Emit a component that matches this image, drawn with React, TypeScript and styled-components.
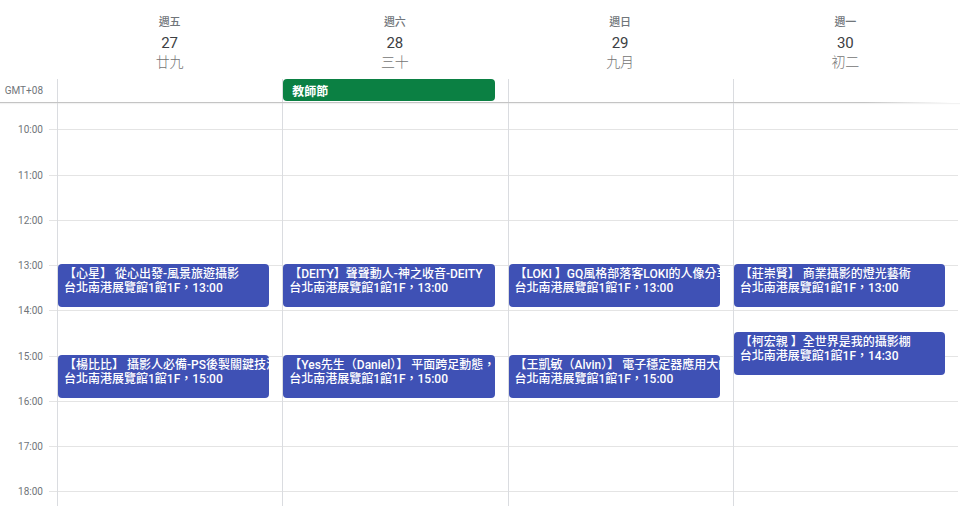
import React from "react"
import styled, { createGlobalStyle } from "styled-components"

const HOUR = 45.25
const FIRST_HOUR = 9
const LAST_LABEL = 18

const days = [
  { weekday: "週五", date: "27", lunar: "廿九" },
  { weekday: "週六", date: "28", lunar: "三十" },
  { weekday: "週日", date: "29", lunar: "九月" },
  { weekday: "週一", date: "30", lunar: "初二" },
]

const allDay: Record<number, string> = { 1: "教師節" }

type CalEvent = { day: number; start: number; title: string; where: string; time: string }

const events: CalEvent[] = [
  { day: 0, start: 13, title: "【心星】 從心出發-風景旅遊攝影", where: "台北南港展覽館1館1F", time: "13:00" },
  { day: 0, start: 15, title: "【楊比比】 攝影人必備-PS後製關鍵技法", where: "台北南港展覽館1館1F", time: "15:00" },
  { day: 1, start: 13, title: "【DEITY】聲聲動人-神之收音-DEITY", where: "台北南港展覽館1館1F", time: "13:00" },
  { day: 1, start: 15, title: "【Yes先生（Daniel）】 平面跨足動態，", where: "台北南港展覽館1館1F", time: "15:00" },
  { day: 2, start: 13, title: "【LOKI 】GQ風格部落客LOKI的人像分享", where: "台北南港展覽館1館1F", time: "13:00" },
  { day: 2, start: 15, title: "【王凱敏（Alvin）】 電子穩定器應用大師", where: "台北南港展覽館1館1F", time: "15:00" },
  { day: 3, start: 13, title: "【莊崇賢】 商業攝影的燈光藝術", where: "台北南港展覽館1館1F", time: "13:00" },
  { day: 3, start: 14.5, title: "【柯宏親 】全世界是我的攝影棚", where: "台北南港展覽館1館1F", time: "14:30" },
]

const hours = Array.from({ length: 10 }, (_, i) => FIRST_HOUR + i)

const GlobalStyle = createGlobalStyle`
  html, body {
    margin: 0;
    padding: 0;
    background: #fff;
    font-family: Roboto, "Noto Sans CJK TC", sans-serif;
    overflow: hidden;
  }
`

const Page = styled.div`
  width: 960px;
  height: 506px;
  display: flex;
  flex-direction: column;
  overflow: hidden;
`

const Columns = styled.div`
  display: grid;
  grid-template-columns: 57px repeat(4, 1fr);
  padding-right: 2px;
`

const Header = styled(Columns)`
  height: 79px;
`

const DayHead = styled.div`
  display: flex;
  flex-direction: column;
  align-items: center;
  padding-top: 15px;
`

const Weekday = styled.div`
  font-size: 11px;
  line-height: 16px;
  font-weight: 500;
  color: #70757a;
`

const DateNum = styled.div`
  margin-top: 2px;
  font-size: 15px;
  line-height: 20px;
  font-weight: 400;
  color: #3c4043;
`

const Lunar = styled.div`
  font-size: 14px;
  line-height: 18px;
  font-weight: 300;
  color: #757575;
`

const AllDayRow = styled(Columns)`
  height: 23px;
  border-bottom: 1px solid transparent;
  border-image: linear-gradient(to right, #c4c4c4 0%, #c4c4c4 90%, rgba(196, 196, 196, 0) 99%) 1;
  box-shadow: 0 1px 1px rgba(0, 0, 0, 0.05);
`

const Zone = styled.div`
  display: flex;
  align-items: center;
  justify-content: flex-end;
  padding-right: 14px;
  font-size: 10px;
  color: #70757a;
`

const AllDayCell = styled.div`
  border-left: 1px solid #dadce0;
`

const AllDayChip = styled.div`
  width: calc(100% - 13px);
  height: 22px;
  box-sizing: border-box;
  padding-left: 9px;
  display: flex;
  align-items: center;
  border-radius: 4px;
  background: #0b8043;
  color: #fff;
  font-size: 12px;
  font-weight: 700;
`

const Body = styled.div`
  flex: 1;
  overflow: hidden;
`

const Grid = styled(Columns)`
  margin-top: -18px;
`

const Gutter = styled.div`
  display: flex;
  flex-direction: column;
`

const TimeSlot = styled.div`
  height: ${HOUR}px;
  flex: none;
  display: flex;
  align-items: flex-end;
  justify-content: flex-end;
  padding-right: 14px;
  background-image: linear-gradient(#e4e4e4, #e4e4e4);
  background-size: 8px 1px;
  background-position: right bottom;
  background-repeat: no-repeat;
`

const TimeLabel = styled.span`
  font-size: 10px;
  line-height: 12px;
  color: #70757a;
  transform: translateY(50%);
`

const DayColumn = styled.div`
  position: relative;
  display: flex;
  flex-direction: column;
  border-left: 1px solid #dadce0;
`

const HourCell = styled.div`
  height: ${HOUR}px;
  flex: none;
  box-sizing: border-box;
  border-bottom: 1px solid #e4e4e4;
`

const EventCard = styled.div`
  position: absolute;
  left: 0;
  width: calc(100% - 13px);
  height: 43px;
  box-sizing: border-box;
  padding: 3px 0 0 6px;
  border-radius: 4px;
  background: #3f51b5;
  color: #fff;
  overflow: hidden;
`

const EventLine = styled.div`
  font-size: 12px;
  line-height: 14px;
  font-weight: 500;
  white-space: nowrap;
  overflow: hidden;
`

export default function App() {
  return (
    <Page>
      <GlobalStyle />
      <Header>
        <div />
        {days.map((d) => (
          <DayHead key={d.date}>
            <Weekday>{d.weekday}</Weekday>
            <DateNum>{d.date}</DateNum>
            <Lunar>{d.lunar}</Lunar>
          </DayHead>
        ))}
      </Header>

      <AllDayRow>
        <Zone>GMT+08</Zone>
        {days.map((d, i) => (
          <AllDayCell key={d.date}>
            {allDay[i] && <AllDayChip>{allDay[i]}</AllDayChip>}
          </AllDayCell>
        ))}
      </AllDayRow>

      <Body>
        <Grid>
          <Gutter>
            {hours.map((h) => (
              <TimeSlot key={h}>
                {h + 1 <= LAST_LABEL && <TimeLabel>{h + 1}:00</TimeLabel>}
              </TimeSlot>
            ))}
          </Gutter>
          {days.map((d, i) => (
            <DayColumn key={d.date}>
              {hours.map((h) => (
                <HourCell key={h} />
              ))}
              {events
                .filter((e) => e.day === i)
                .map((e) => (
                  <EventCard key={e.title} style={{ top: (e.start - FIRST_HOUR) * HOUR - 2 }}>
                    <EventLine>{e.title}</EventLine>
                    <EventLine>
                      {e.where}，{e.time}
                    </EventLine>
                  </EventCard>
                ))}
            </DayColumn>
          ))}
        </Grid>
      </Body>
    </Page>
  )
}
